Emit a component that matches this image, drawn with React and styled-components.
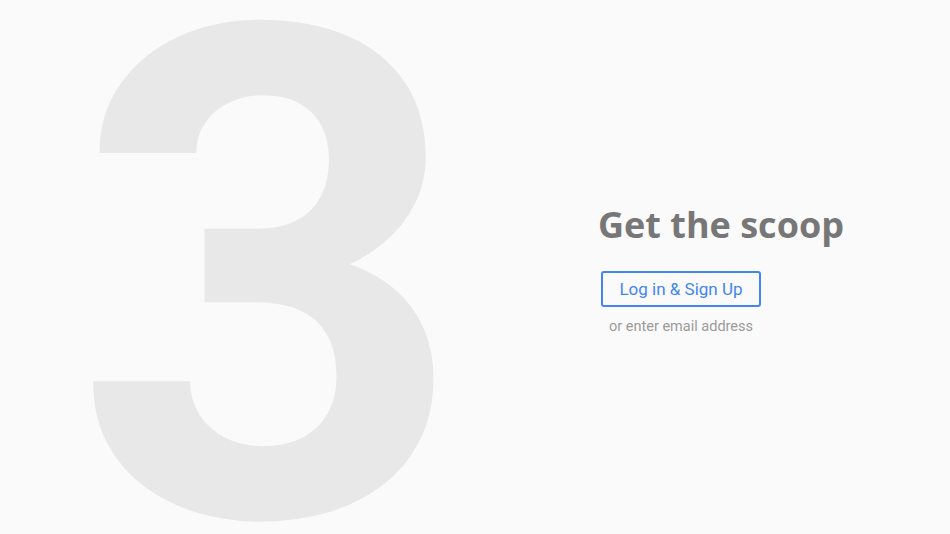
import React from 'react';
import styled, { createGlobalStyle } from 'styled-components';

const GlobalStyle = createGlobalStyle`
  html, body {
    margin: 0;
    padding: 0;
    background: #fafafa;
  }
  body {
    font-family: Roboto, "Liberation Sans", sans-serif;
  }
`;

const Page = styled.main`
  width: 950px;
  height: 534px;
  overflow: hidden;
  display: grid;
  grid-template-columns: 598px 1fr;
  grid-template-rows: 534px;
  align-items: start;
`;

const BigDigit = styled.div`
  font-family: Roboto, sans-serif;
  font-weight: 700;
  font-size: 687px;
  line-height: 534px;
  padding: 14px 0 0 72px;
  color: #e8e8e8;
  user-select: none;
`;

const Panel = styled.section`
  display: flex;
  flex-direction: column;
  align-items: flex-start;
  padding-top: 203px;
`;

const Title = styled.h1`
  margin: 0 0 24px;
  font-family: "Open Sans", sans-serif;
  font-weight: 700;
  font-size: 36px;
  line-height: 44px;
  color: #777777;
`;

const LoginBlock = styled.div`
  display: flex;
  flex-direction: column;
  align-items: center;
  gap: 11px;
  margin-left: 3px;
`;

const LoginButton = styled.button`
  width: 160px;
  height: 36px;
  border: 2px solid #4285f4;
  border-radius: 3px;
  background: #fafafa;
  color: #4285f4;
  font-family: Roboto, sans-serif;
  font-size: 17px;
  cursor: pointer;
`;

const Caption = styled.span`
  font-size: 14.5px;
  color: #9a9a9a;
`;

export default function App() {
  return (
    <>
      <GlobalStyle />
      <Page>
        <BigDigit>3</BigDigit>
        <Panel>
          <Title>Get the scoop</Title>
          <LoginBlock>
            <LoginButton>Log in &amp; Sign Up</LoginButton>
            <Caption>or enter email address</Caption>
          </LoginBlock>
        </Panel>
      </Page>
    </>
  );
}
